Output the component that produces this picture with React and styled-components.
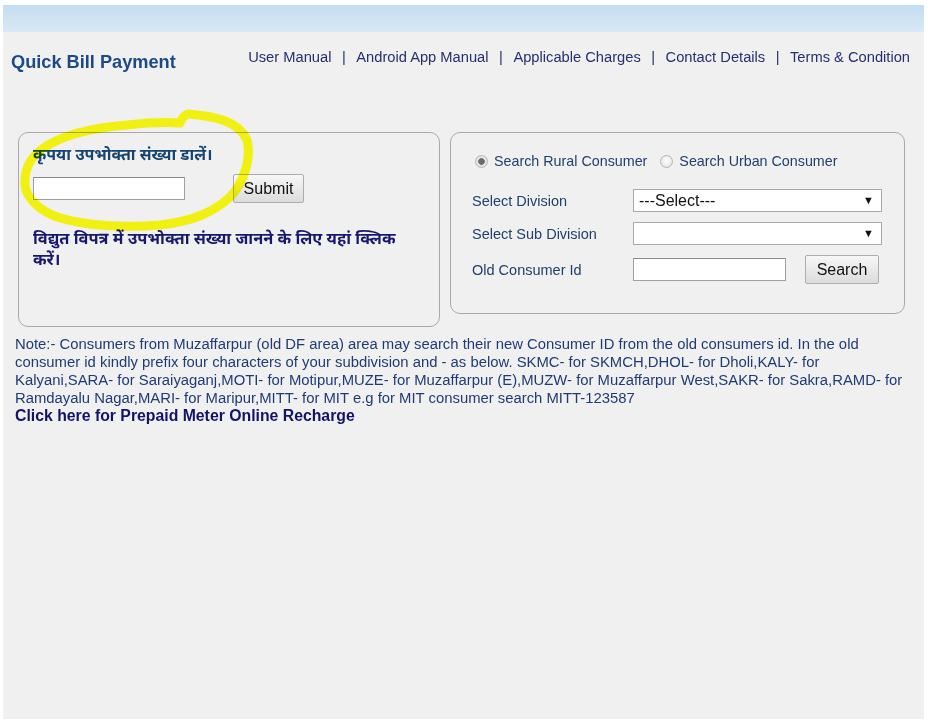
import React from 'react';
import styled, { createGlobalStyle } from 'styled-components';

const GlobalStyle = createGlobalStyle`
  body {
    margin: 0;
    background: #ffffff;
    font-family: "Liberation Sans", Arial, sans-serif;
  }
`;

const hindiFont = `"Noto Sans Devanagari", "Lohit Devanagari", "Noto Sans", "Liberation Sans", sans-serif`;

const Root = styled.div`
  position: relative;
  width: 928px;
  height: 723px;
`;

const Page = styled.div`
  position: absolute;
  left: 3px;
  top: 5px;
  width: 921px;
  height: 714px;
  background: #f0f0f0;
  display: flex;
  flex-direction: column;
`;

const TopBar = styled.div`
  height: 27px;
  background: linear-gradient(#c4ddf1, #d8e9f7);
`;

const Header = styled.div`
  display: flex;
  justify-content: space-between;
  align-items: flex-start;
  height: 100px;
  box-sizing: border-box;
  padding: 16px 14px 0 8px;
`;

const Title = styled.h1`
  margin: 4px 0 0;
  font-size: 18.2px;
  line-height: 21px;
  font-weight: bold;
  color: #1a4b86;
`;

const Nav = styled.div`
  display: flex;
  align-items: center;
  font-size: 14.7px;
  line-height: 18px;
  color: #262e70;
`;

const NavLink = styled.a`
  color: inherit;
  text-decoration: none;
`;

const Sep = styled.span`
  margin: 0 10.5px;
`;

const Content = styled.div`
  display: flex;
  align-items: flex-start;
  gap: 10px;
  padding: 0 19px 0 15px;
`;

const Box = styled.div`
  box-sizing: border-box;
  width: ${p => p.$w}px;
  height: ${p => p.$h}px;
  border: 1px solid #a9a9a9;
  border-radius: 10px;
`;

const LeftBox = styled(Box)`
  padding: 14px 14px 0;
`;

const Heading = styled.div`
  font-family: ${hindiFont};
  font-weight: bold;
  font-size: 16px;
  line-height: 20px;
  color: #15456f;
`;

const InputRow = styled.div`
  display: flex;
  align-items: center;
  gap: 48px;
  margin-top: 7px;
`;

const TextInput = styled.input`
  box-sizing: border-box;
  width: ${p => p.$w}px;
  height: 23px;
  margin: 0;
  border: 1px solid #a0a0a0;
  border-top-color: #8a8a8a;
  background: #fff;
`;

const Button = styled.button`
  box-sizing: border-box;
  width: ${p => p.$w}px;
  height: 29px;
  margin: 0;
  padding: 0;
  border: 1px solid #adadad;
  border-radius: 2px;
  background: linear-gradient(#f7f7f7, #dcdcdc);
  font-family: "Liberation Sans", Arial, sans-serif;
  font-size: 16px;
  color: #111;
`;

const HindiLink = styled.a`
  display: block;
  margin-top: 27px;
  font-family: ${hindiFont};
  font-weight: bold;
  font-size: 16.4px;
  line-height: 21px;
  color: #17186e;
  text-decoration: none;
  white-space: nowrap;
`;

const RightBox = styled(Box)`
  padding: 19px 21px 0;
`;

const RadioRow = styled.div`
  display: flex;
  align-items: center;
  height: 18px;
  font-size: 14.3px;
  color: #22406f;
`;

const RadioLabel = styled.label`
  display: flex;
  align-items: center;
  margin-right: 10px;
`;

const Radio = styled.input.attrs({ type: 'radio' })`
  appearance: none;
  width: 13px;
  height: 13px;
  margin: 0 6px 0 3px;
  border: 1px solid #b5b5b5;
  border-radius: 50%;
  background: radial-gradient(circle at 50% 40%, #ffffff, #dcdcdc);
  &:checked {
    background: radial-gradient(circle, #6a6a6a 0 3px, #e4e4e4 3.5px);
  }
`;

const Form = styled.div`
  display: grid;
  grid-template-columns: 161px 1fr;
  row-gap: 10px;
  align-items: center;
  margin-top: 19px;
  font-size: 14.5px;
  color: #22406f;
`;

const SelectWrap = styled.div`
  position: relative;
  width: 249px;
  &::after {
    content: '▼';
    position: absolute;
    right: 8px;
    top: 5px;
    font-size: 11px;
    color: #111;
    pointer-events: none;
  }
`;

const Select = styled.select`
  appearance: none;
  box-sizing: border-box;
  width: 100%;
  height: 23px;
  margin: 0;
  padding: 0 5px;
  border: 1px solid #a9a9a9;
  border-radius: 0;
  background: #fff;
  font-family: "Liberation Sans", Arial, sans-serif;
  font-size: 16px;
  color: #111;
`;

const Inline = styled.div`
  display: flex;
  align-items: center;
  gap: 19px;
`;

const Note = styled.div`
  margin-top: 8px;
  padding-left: 12px;
  font-size: 14.85px;
  line-height: 18px;
  color: #1f3b76;
  white-space: nowrap;
`;

const NoteLink = styled.a`
  display: block;
  font-weight: bold;
  font-size: 15.8px;
  color: #12126a;
  text-decoration: none;
`;

const Marker = styled.svg`
  position: absolute;
  left: 0;
  top: 0;
  pointer-events: none;
  mix-blend-mode: multiply;
`;

const navItems = ['User Manual', 'Android App Manual', 'Applicable Charges', 'Contact Details', 'Terms & Condition'];

export default function App() {
  return (
    <Root>
      <GlobalStyle />
      <Page>
        <TopBar />
        <Header>
          <Title>Quick Bill Payment</Title>
          <Nav>
            {navItems.map((item, i) => (
              <React.Fragment key={item}>
                {i > 0 && <Sep>|</Sep>}
                <NavLink href="#">{item}</NavLink>
              </React.Fragment>
            ))}
          </Nav>
        </Header>

        <Content>
          <LeftBox $w={422} $h={195}>
            <Heading>कृपया उपभोक्ता संख्या डालें।</Heading>
            <InputRow>
              <TextInput $w={152} />
              <Button $w={71}>Submit</Button>
            </InputRow>
            <HindiLink href="#">
              विद्युत विपत्र में उपभोक्ता संख्या जानने के लिए यहां क्लिक
              <br />
              करें।
            </HindiLink>
          </LeftBox>

          <RightBox $w={455} $h={182}>
            <RadioRow>
              <RadioLabel>
                <Radio name="area" defaultChecked />
                Search Rural Consumer
              </RadioLabel>
              <RadioLabel>
                <Radio name="area" />
                Search Urban Consumer
              </RadioLabel>
            </RadioRow>
            <Form>
              <span>Select Division</span>
              <SelectWrap>
                <Select defaultValue="">
                  <option value="">---Select---</option>
                </Select>
              </SelectWrap>
              <span>Select Sub Division</span>
              <SelectWrap>
                <Select defaultValue="">
                  <option value=""></option>
                </Select>
              </SelectWrap>
              <span>Old Consumer Id</span>
              <Inline>
                <TextInput $w={153} />
                <Button $w={74}>Search</Button>
              </Inline>
            </Form>
          </RightBox>
        </Content>

        <Note>
          Note:- Consumers from Muzaffarpur (old DF area) area may search their new Consumer ID from the old consumers id. In the old
          <br />
          consumer id kindly prefix four characters of your subdivision and - as below. SKMC- for SKMCH,DHOL- for Dholi,KALY- for
          <br />
          Kalyani,SARA- for Saraiyaganj,MOTI- for Motipur,MUZE- for Muzaffarpur (E),MUZW- for Muzaffarpur West,SAKR- for Sakra,RAMD- for
          <br />
          Ramdayalu Nagar,MARI- for Maripur,MITT- for MIT e.g for MIT consumer search MITT-123587
          <NoteLink href="#">Click here for Prepaid Meter Online Recharge</NoteLink>
        </Note>
      </Page>

      <Marker width="928" height="723" viewBox="0 0 928 723">
        <path
          d="M 180 123 C 182 118, 185 115, 188 114 C 212 116, 238 120, 247 140 C 252 160, 242 185, 230 197 C 215 211, 195 221, 160 225 C 125 228, 85 226, 57 217 C 38 210, 26 197, 25 185 C 24 170, 30 158, 42 149 C 60 136, 90 128, 127 125 C 145 123, 165 122, 180 123"
          fill="none"
          stroke="#ffff14"
          strokeWidth="9"
          strokeLinecap="round"
          strokeLinejoin="round"
        />
      </Marker>
    </Root>
  );
}
